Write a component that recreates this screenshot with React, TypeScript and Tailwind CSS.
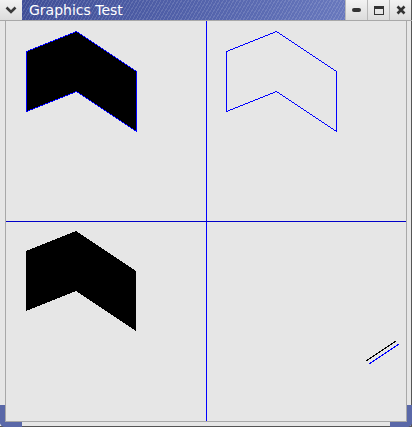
import React from "react";

const shape = "20,30 70,10 130,50 130,110 70,70 20,90";

const TitleButton = ({ children }: { children: React.ReactNode }) => (
  <div className="w-[22px] h-full flex items-center justify-center bg-[linear-gradient(180deg,#f2f2f2,#dcdcdc)] border-l border-[#b8b8b8]">
    {children}
  </div>
);

export default function App() {
  return (
    <div className="relative w-[412px] h-[427px] bg-[#e6e6e6] flex flex-col overflow-hidden font-['DejaVu_Sans',sans-serif]">
      {/* title bar */}
      <div className="flex h-[21px] border-b border-[#a8a8a8]">
        <div className="w-[22px] h-full flex items-center justify-center bg-[linear-gradient(180deg,#f2f2f2,#dcdcdc)]">
          <svg width="12" height="8" viewBox="0 0 12 8">
            <path d="M1.5 1.5 L6 6 L10.5 1.5" fill="none" stroke="#3a3a3a" strokeWidth="2.6" />
          </svg>
        </div>
        <div className="flex-1 h-full flex items-center pl-[7px] bg-[repeating-linear-gradient(120deg,rgba(255,255,255,0.13)_0px,rgba(255,255,255,0.13)_1px,transparent_1px,transparent_3px),linear-gradient(90deg,#3f4e97,#5565ad_60%,#6878bd)]">
          <span className="text-white text-[14px] leading-none">Graphics Test</span>
        </div>
        <TitleButton>
          <div className="w-[9px] h-[4px] rounded-[2px] bg-[#333]" />
        </TitleButton>
        <TitleButton>
          <div className="w-[10px] h-[9px] border border-[#333] border-t-[3px]" />
        </TitleButton>
        <div className="w-[23px] h-full flex items-center justify-center bg-[linear-gradient(180deg,#f2f2f2,#dcdcdc)] border-l border-[#b8b8b8] border-r border-r-[#555]">
          <svg width="10" height="10" viewBox="0 0 10 10">
            <path d="M1.5 1.5 L8.5 8.5 M8.5 1.5 L1.5 8.5" stroke="#333" strokeWidth="2.6" />
          </svg>
        </div>
      </div>

      {/* body */}
      <div className="flex border-r border-[#555]">
        <div className="w-[5px] border-r border-[#a8a8a8] box-content" />
        <svg width="400" height="400" viewBox="0 0 400 400" shapeRendering="crispEdges" className="block">
          <rect width="400" height="400" fill="#e6e6e6" />
          <line x1="200.5" y1="0" x2="200.5" y2="400" stroke="#0000ff" />
          <line x1="0" y1="200.5" x2="400" y2="200.5" stroke="#0000c8" />
          <polygon points={shape} fill="#000" stroke="#0000ff" transform="translate(0.5,0.5)" />
          <polygon points={shape} fill="none" stroke="#0000ff" transform="translate(200.5,0.5)" />
          <polygon points={shape} fill="#000" transform="translate(0,200)" />
          <line x1="360" y1="340" x2="390" y2="320" stroke="#000" />
          <line x1="363" y1="343" x2="393" y2="323" stroke="#0000ff" />
        </svg>
        <div className="w-[4px] border-l border-[#a8a8a8] box-content" />
      </div>

      {/* bottom frame */}
      <div className="flex-1 border-t border-[#a8a8a8] border-b border-b-[#555] border-r border-r-[#555]" />

      {/* resize corners */}
      <div className="absolute left-0 bottom-0 w-[22px] h-[22px] border-l-[5px] border-b-[5px] border-[#5a68a8] rounded-bl-[5px]" />
      <div className="absolute right-0 bottom-0 w-[22px] h-[22px] border-r-[5px] border-b-[5px] border-[#5a68a8] rounded-br-[5px]" />
    </div>
  );
}
